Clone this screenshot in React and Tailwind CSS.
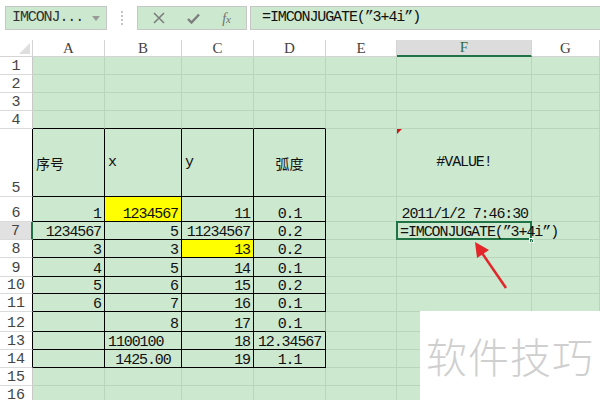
const COLS = [
  { k: "A", w: "w-[72px]" },
  { k: "B", w: "w-[77px]" },
  { k: "C", w: "w-[72px]" },
  { k: "D", w: "w-[72px]" },
  { k: "E", w: "w-[71px]" },
  { k: "F", w: "w-[135px]" },
  { k: "G", w: "w-[68px]" },
];

const FORMULA = "=IMCONJUGATE(\u201d3+4i\u201d)";

const ROWS = [
  { n: 1, h: "h-[18px]" },
  { n: 2, h: "h-[18px]" },
  { n: 3, h: "h-[18px]" },
  { n: 4, h: "h-[18px]" },
  {
    n: 5,
    h: "h-[68px]",
    mid: true,
    cells: {
      A: { v: "序号", a: "l", cjk: true },
      B: { v: "x", a: "l" },
      C: { v: "y", a: "l" },
      D: { v: "弧度", a: "c", cjk: true },
      F: { v: "#VALUE!", a: "c" },
    },
  },
  {
    n: 6,
    h: "h-[25px]",
    cells: {
      A: { v: "1", a: "r" },
      B: { v: "1234567", a: "r", y: true },
      C: { v: "11", a: "r" },
      D: { v: "0.1", a: "c" },
      F: { v: "2011/1/2 7:46:30", a: "r" },
    },
  },
  {
    n: 7,
    h: "h-[18px]",
    cells: {
      A: { v: "1234567", a: "r" },
      B: { v: "5", a: "r" },
      C: { v: "11234567", a: "r" },
      D: { v: "0.2", a: "c" },
      F: { v: FORMULA, a: "l", sel: true },
    },
  },
  {
    n: 8,
    h: "h-[18px]",
    cells: {
      A: { v: "3", a: "r" },
      B: { v: "3", a: "r" },
      C: { v: "13", a: "r", y: true },
      D: { v: "0.2", a: "c" },
    },
  },
  {
    n: 9,
    h: "h-[19px]",
    cells: { A: { v: "4", a: "r" }, B: { v: "5", a: "r" }, C: { v: "14", a: "r" }, D: { v: "0.1", a: "c" } },
  },
  {
    n: 10,
    h: "h-[17px]",
    cells: { A: { v: "5", a: "r" }, B: { v: "6", a: "r" }, C: { v: "15", a: "r" }, D: { v: "0.2", a: "c" } },
  },
  {
    n: 11,
    h: "h-[18px]",
    cells: { A: { v: "6", a: "r" }, B: { v: "7", a: "r" }, C: { v: "16", a: "r" }, D: { v: "0.1", a: "c" } },
  },
  {
    n: 12,
    h: "h-[20px]",
    cells: { B: { v: "8", a: "r" }, C: { v: "17", a: "r" }, D: { v: "0.1", a: "c" } },
  },
  {
    n: 13,
    h: "h-[18px]",
    cells: { B: { v: "1100100", a: "l" }, C: { v: "18", a: "r" }, D: { v: "12.34567", a: "c" } },
  },
  {
    n: 14,
    h: "h-[18px]",
    cells: { B: { v: "1425.00", a: "c" }, C: { v: "19", a: "r" }, D: { v: "1.1", a: "c" } },
  },
  { n: 15, h: "h-[18px]" },
  { n: 16, h: "h-[18px]" },
];

const MONO = "font-['Liberation_Mono',monospace] text-[15px] leading-[13px] tracking-[-1.1px]";
const CJK = "font-['Noto_Sans_CJK_SC',sans-serif] text-[14px] leading-[16px]";

function cellBorder(n, k) {
  const tableCol = "ABCD".includes(k);
  if (n >= 5 && n <= 14 && tableCol) {
    if (n === 12 && k === "D") return "border-r border-b border-r-[#f0896a] border-b-black";
    return "border-r border-b border-black";
  }
  if (n === 4 && tableCol) return "border-r border-b border-r-[#b9d6bc] border-b-black";
  return "border-r border-b border-[#b9d6bc]";
}

function rowHeadBorder(n) {
  if (n === 7) return "border-r-2 border-r-[#217346] border-b border-b-[#dadada] bg-[#e1e1e1]";
  if (n >= 5 && n <= 14) return "border-r border-r-black border-b border-b-[#dadada] bg-white";
  return "border-r border-r-[#c8c8c8] border-b border-b-[#dadada] bg-white";
}

function alignClass(a) {
  if (a === "l") return "justify-start pl-[3px]";
  if (a === "r") return "justify-end pr-[3px]";
  return "justify-center";
}

function Cell({ row, col }) {
  const c = row.cells && row.cells[col.k];
  const v = row.mid ? "items-center" : "items-end";
  return (
    <div
      className={`relative flex shrink-0 whitespace-nowrap text-[#111] ${col.w} ${cellBorder(row.n, col.k)} ${v} ${
        c ? alignClass(c.a) : ""
      } ${c && c.y ? "bg-[#ffff00]" : ""}`}
    >
      {c && <span className={`relative z-10 ${c.cjk ? CJK : MONO}`}>{c.v}</span>}
      {c && c.sel && (
        <>
          <div className="absolute left-[-1px] top-[-1px] right-[-1px] bottom-[-1px] border-2 border-[#217346]" />
          <div className="absolute right-[-3px] bottom-[-4px] w-[5px] h-[5px] bg-[#217346] border border-white" />
        </>
      )}
      {row.n === 5 && col.k === "F" && (
        <div className="absolute left-0 top-0 w-0 h-0 border-t-[5px] border-r-[5px] border-t-[#d01818] border-r-transparent" />
      )}
    </div>
  );
}

function Toolbar() {
  return (
    <div className="h-[40px] flex items-start pt-[6px] pl-[5px] bg-white">
      <div className="w-[102px] h-[24px] flex items-center justify-between px-[6px] bg-[#cce8cf] border border-[#c6c6c6]">
        <span className="font-['Liberation_Mono',monospace] text-[15px] tracking-[-1.1px] text-[#333]">IMCONJ...</span>
        <svg width="8" height="5" viewBox="0 0 8 5">
          <polygon points="0,0 8,0 4,5" fill="#9a9a9a" />
        </svg>
      </div>
      <div className="w-[30px] h-[24px] flex flex-col items-center justify-center gap-[2px]">
        <div className="w-[2px] h-[2px] bg-[#c4c4c4]" />
        <div className="w-[2px] h-[2px] bg-[#c4c4c4]" />
        <div className="w-[2px] h-[2px] bg-[#c4c4c4]" />
        <div className="w-[2px] h-[2px] bg-[#c4c4c4]" />
      </div>
      <div className="w-[110px] h-[24px] flex items-center justify-around px-[4px] bg-[#cce8cf] border border-[#c6c6c6]">
        <svg width="12" height="12" viewBox="0 0 12 12">
          <path d="M1 1 L11 11 M11 1 L1 11" stroke="#7d7d7d" strokeWidth="1.6" />
        </svg>
        <svg width="13" height="11" viewBox="0 0 13 11">
          <path d="M1 6 L4.5 9.5 L12 1.5" stroke="#7d7d7d" strokeWidth="2.4" fill="none" />
        </svg>
        <span className="font-['Liberation_Serif',serif] italic text-[14px] text-[#6f6f6f]">
          f<span className="text-[11px]">x</span>
        </span>
      </div>
      <div className="ml-[3px] flex-1 h-[24px] flex items-center pl-[11px] bg-[#cce8cf] border border-[#c6c6c6] border-r-0">
        <span className="font-['Liberation_Mono',monospace] text-[15px] tracking-[-1.1px] text-[#111]">{FORMULA}</span>
      </div>
    </div>
  );
}

function HeaderRow() {
  return (
    <div className="flex h-[17px]">
      <div className="w-[33px] shrink-0 bg-white border-r border-b border-[#d4d4d4] relative">
        <svg className="absolute left-[19px] top-[3px]" width="11" height="11" viewBox="0 0 11 11">
          <polygon points="11,0 11,11 0,11" fill="#dedede" />
        </svg>
      </div>
      {COLS.map((c) => (
        <div
          key={c.k}
          className={`shrink-0 flex items-end justify-center font-['Liberation_Serif',serif] text-[15px] leading-[16px] ${c.w} ${
            c.k === "F"
              ? "bg-[#dcdcdc] border-b-2 border-b-[#217346] border-r border-r-[#d4d4d4] text-[#2e6b47]"
              : "bg-white border-r border-b border-[#d4d4d4] text-[#444]"
          }`}
        >
          {c.k}
        </div>
      ))}
    </div>
  );
}

export default function App() {
  return (
    <div className="relative w-[600px] h-[400px] overflow-hidden bg-[#cce8cf]">
      <Toolbar />
      <HeaderRow />
      {ROWS.map((r) => (
        <div key={r.n} className={`flex ${r.h}`}>
          <div
            className={`w-[33px] shrink-0 flex items-end justify-center pb-[1px] font-['Liberation_Mono',monospace] text-[15px] leading-[13px] text-[#444] ${rowHeadBorder(
              r.n
            )}`}
          >
            {r.n}
          </div>
          {COLS.map((c) => (
            <Cell key={c.k} row={r} col={c} />
          ))}
        </div>
      ))}

      <svg className="absolute left-0 top-0 pointer-events-none" width="600" height="400">
        <line x1="506" y1="288" x2="482" y2="253" stroke="#e3262a" strokeWidth="2.5" />
        <polygon points="475,242 489,250 477,258" fill="#e3262a" />
      </svg>

      <div className="absolute left-[420px] top-[311px] w-[180px] h-[89px] bg-white flex items-center justify-center">
        <span className="font-['Noto_Sans_CJK_SC',sans-serif] text-[41px] font-light text-[#cfcfcf] tracking-[1px]">
          软件技巧
        </span>
      </div>
    </div>
  );
}
